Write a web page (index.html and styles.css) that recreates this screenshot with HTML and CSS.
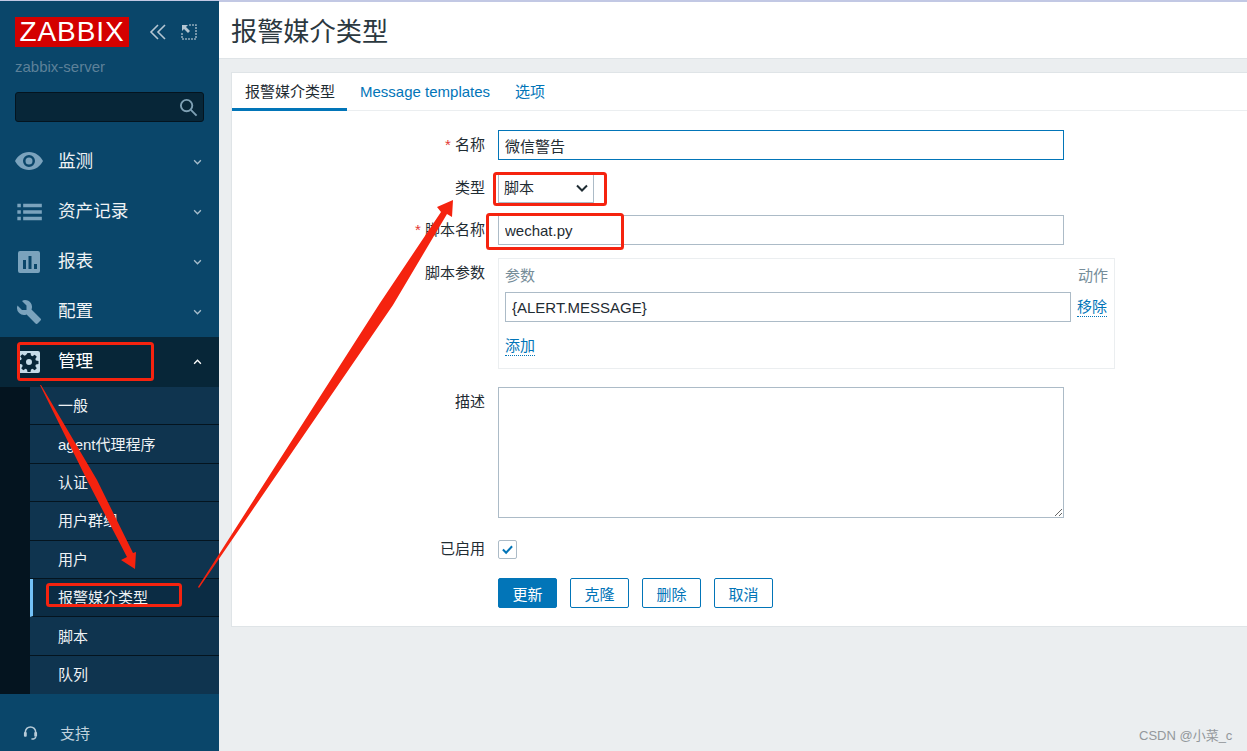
FILE: index.html
```html
<!DOCTYPE html>
<html lang="zh-CN">
<head>
<meta charset="utf-8">
<title>报警媒介类型</title>
<link rel="stylesheet" href="styles.css">
</head>
<body>
<div class="app">
  <aside class="sidebar">
    <div class="brand-row">
      <div class="logo">ZABBIX</div>
      <svg class="brand-icon collapse" viewBox="0 0 18 18"><path d="M9 2 2 9l7 7M16 2 9 9l7 7"/></svg>
      <svg class="brand-icon expand" viewBox="0 0 16 16"><path class="dots" d="M8 1h7v14H1V8"/><path class="solid" d="M1 1h6L5 3l4 4-2 2-4-4-2 2z"/></svg>
    </div>
    <div class="hostname">zabbix-server</div>
    <div class="search">
      <svg viewBox="0 0 20 20"><circle cx="8" cy="8" r="6"/><path d="m12.500 12.500 6 6"/></svg>
    </div>
    <nav class="menu">
      <a class="menu-item"><span class="mi"><svg viewBox="0 1 28 18"><path class="fill" fill-rule="evenodd" d="M14 0C7.500 0 2.500 4 0 9c2.500 5 7.500 9 14 9s11.500-4 14-9c-2.500-5-7.500-9-14-9zm0 3a6 6 0 1 1 0 12 6 6 0 0 1 0-12zm0 2.500a3.500 3.500 0 1 0 0 7 3.500 3.500 0 0 0 0-7z"/></svg></span><span class="ml">监测</span><svg class="chev" viewBox="0 0 8 5"><path d="m1 1 3 3 3-3"/></svg></a>
      <a class="menu-item"><span class="mi"><svg viewBox="0 0 24 14"><path class="fill" d="M2 0h3v3H2zM7 0h16v3H7zM2 5.500h3v3H2zM7 5.500h16v3H7zM2 11h3v3H2zM7 11h16v3H7z"/></svg></span><span class="ml">资产记录</span><svg class="chev" viewBox="0 0 8 5"><path d="m1 1 3 3 3-3"/></svg></a>
      <a class="menu-item"><span class="mi"><svg viewBox="0 0 24 24"><path class="fill" fill-rule="evenodd" d="M3 1h18a2 2 0 0 1 2 2v18a2 2 0 0 1-2 2H3a2 2 0 0 1-2-2V3a2 2 0 0 1 2-2zm3 9v9h3v-9zm5.500-4v13h3V6zM17 14v5h3v-5z"/></svg></span><span class="ml">报表</span><svg class="chev" viewBox="0 0 8 5"><path d="m1 1 3 3 3-3"/></svg></a>
      <a class="menu-item"><span class="mi"><svg viewBox="0 0 24 24"><path class="fill" d="M8 0a7 7 0 0 1 6.500 9.600L23.500 18.500a1.500 1.500 0 0 1 0 2.100l-2.900 2.900a1.500 1.500 0 0 1-2.100 0L9.600 14.500A7 7 0 0 1 .5 5.500L5 10h4.500V5.500L5 1A7 7 0 0 1 8 0z"/></svg></span><span class="ml">配置</span><svg class="chev" viewBox="0 0 8 5"><path d="m1 1 3 3 3-3"/></svg></a>
      <a class="menu-item open"><span class="mi"><svg viewBox="0 0 24 24"><rect class="fill" x="1" y="1" width="22" height="22" rx="2"/><path class="gear" fill-rule="evenodd" d="M10.500 3h3l.5 2.600 1.500.6 2.200-1.500 2.100 2.100-1.500 2.200.6 1.500 2.600.5v3l-2.600.5-.6 1.500 1.500 2.200-2.100 2.100-2.200-1.500-1.500.6-.5 2.600h-3l-.5-2.600-1.500-.6-2.200 1.500-2.100-2.100 1.500-2.200-.6-1.500L1.500 13.500v-3l2.600-.5.6-1.500-1.500-2.200 2.100-2.100 2.200 1.500 1.500-.6zM12 9a3 3 0 1 0 0 6 3 3 0 0 0 0-6z"/></svg></span><span class="ml">管理</span><svg class="chev" viewBox="0 0 8 5"><path d="m1 4 3-3 3 3"/></svg></a>
      <ul class="submenu">
        <li class="sub-item">一般</li>
        <li class="sub-item">agent代理程序</li>
        <li class="sub-item">认证</li>
        <li class="sub-item">用户群组</li>
        <li class="sub-item">用户</li>
        <li class="sub-item current">报警媒介类型</li>
        <li class="sub-item">脚本</li>
        <li class="sub-item last">队列</li>
      </ul>
    </nav>
    <div class="support">
      <svg viewBox="0 0 16 16"><path d="M2.500 10V7.500a5.500 5.500 0 0 1 11 0V10"/><rect x="1" y="7.500" width="3" height="5" rx="1"/><rect x="12" y="7.500" width="3" height="5" rx="1"/><path d="M13.500 12.500c0 1.500-2 2.500-4.500 2.500"/></svg>
      <span>支持</span>
    </div>
  </aside>

  <main class="main">
    <header class="page-head"><h1>报警媒介类型</h1></header>
    <section class="panel">
      <div class="tabs">
        <a class="tab active">报警媒介类型</a>
        <a class="tab">Message templates</a>
        <a class="tab">选项</a>
      </div>
      <form class="form">
        <div class="row row-name">
          <label class="lbl"><i>*</i> 名称</label>
          <input class="field focus" value="微信警告">
        </div>
        <div class="row row-type">
          <label class="lbl">类型</label>
          <div class="select"><span>脚本</span><svg viewBox="0 0 12 8"><path d="m1 1.500 5 5 5-5"/></svg></div>
        </div>
        <div class="row row-script">
          <label class="lbl"><i>*</i> 脚本名称</label>
          <input class="field" value="wechat.py">
        </div>
        <div class="row row-params">
          <label class="lbl">脚本参数</label>
          <div class="params">
            <div class="params-head"><span>参数</span><span>动作</span></div>
            <div class="params-row">
              <input class="field param" value="{ALERT.MESSAGE}">
              <a class="dotted">移除</a>
            </div>
            <a class="dotted add">添加</a>
          </div>
        </div>
        <div class="row row-desc">
          <label class="lbl">描述</label>
          <textarea class="area"></textarea>
        </div>
        <div class="row row-check">
          <label class="lbl">已启用</label>
          <span class="check"><svg viewBox="0 0 14 12"><path d="m2 6 3.500 3.500L12 2.500"/></svg></span>
        </div>
        <div class="row row-btns">
          <span class="lbl"></span>
          <div class="btns">
            <button type="button" class="btn primary">更新</button>
            <button type="button" class="btn">克隆</button>
            <button type="button" class="btn">删除</button>
            <button type="button" class="btn">取消</button>
          </div>
        </div>
      </form>
    </section>
  </main>
</div>

<div class="watermark">CSDN @小菜_c</div>

<svg class="annot" viewBox="0 0 1247 751">
  <g class="boxes">
    <rect x="18.500" y="343.500" width="134" height="36" rx="2"/>
    <rect x="47.500" y="584.500" width="133" height="21" rx="2"/>
    <rect x="494.500" y="173.500" width="111" height="31" rx="2"/>
    <rect x="487.500" y="214.500" width="135" height="34" rx="2"/>
  </g>
  <polygon class="arrow" points="40,385 41,385 97,480 133,553 136,552 135,569 121,560 127,557 87,480"/>
  <polygon class="arrow" points="198,587 380,303 441,212 437,207 453,200 452,217 447,214 393,305 199,588"/>
</svg>
</body>
</html>
```

FILE: styles.css
```css
* { box-sizing: border-box; }
html, body { margin: 0; height: 100%; overflow: hidden; }
body {
  font-family: "Liberation Sans", "Noto Sans CJK SC", sans-serif;
  font-size: 15px;
  color: #1f2c33;
  background: #ebeef0;
}
.app { display: flex; height: 751px; border-top: 2px solid #c2c8e4; }

/* Sidebar */
.sidebar {
  width: 219px; flex: none; margin-top: -1px;
  background: #0a466a;
  display: flex; flex-direction: column;
}
.brand-row { display: flex; align-items: center; padding: 16px 0 0 15px; height: 46px; }
.logo {
  width: 114px; height: 30px; background: #d40000; color: #fff;
  font-family: "Liberation Sans", sans-serif;
  font-size: 28px; line-height: 30px; letter-spacing: .9px; text-align: center;
}
.brand-icon { fill: none; }
.collapse { width: 18px; height: 18px; margin-left: 20px; stroke: #b5c6d2; stroke-width: 1.6; }
.expand { width: 16px; height: 16px; margin-left: 14px; }
.expand .dots { fill: none; stroke: #8fa9ba; stroke-width: 1.600; stroke-dasharray: 2 1; }
.expand .solid { fill: #b5c6d2; }
.hostname { margin: 11px 0 0 15px; height: 18px; line-height: 18px; color: #5d8199; }
.search {
  margin: 16px 0 0 15px; width: 189px; height: 30px;
  background: #072638; border: 1px solid #04141f; border-radius: 3px;
  display: flex; align-items: center; justify-content: flex-end; padding-right: 5px;
}
.search svg { width: 19px; height: 19px; fill: none; stroke: #7ea0b4; stroke-width: 2; }

.menu { margin-top: 15px; display: flex; flex-direction: column; }
.menu-item { height: 50px; display: flex; align-items: center; color: #f0f3f5; position: relative; }
.menu-item.open { background: #072638; color: #fff; }
.mi { width: 58px; flex: none; padding-left: 15px; display: flex; align-items: center; }
.mi svg { width: 28px; height: 24px; }
.fill { fill: #7ba3bd; }
.open .fill { fill: #c5dbe8; }
.gear { fill: #072638; }
.ml { font-size: 17.6px; flex: 1; line-height: 22px; margin-top: -2px; }
.chev { width: 9px; height: 6px; margin-right: 17px; fill: none; stroke: #a7bdcb; stroke-width: 1.200; }
.open .chev { stroke: #fff; }

.submenu {
  list-style: none; margin: 0; padding: 0 0 0 30px;
  background: #04141f;
}
.sub-item {
  height: 38.4px; padding: 0 0 2px 28px; display: flex; align-items: center;
  background: #0f344f; color: #eef2f5;
  border-bottom: 1px solid #04141f;
}
.sub-item.last { border-bottom: 0; }
.sub-item.current { background: #0b2c44; border-left: 3px solid #74c2f7; padding-left: 25px; }

.support {
  flex: 1; display: flex; align-items: center; padding: 19px 0 0 23px; color: #c0d2dd;
}
.support svg { width: 15px; height: 15px; margin-right: 22px; fill: #b7cbd8; }
.support svg path { fill: none; stroke: #b7cbd8; stroke-width: 1.600; }

/* Main */
.main { flex: 1; min-width: 0; display: flex; flex-direction: column; }
.page-head { height: 57px; background: #fff; border-bottom: 1px solid #dfe4e7; padding-left: 12px; display: flex; align-items: center; flex: none; }
.page-head h1 { margin: 0; font-size: 26.2px; font-weight: 400; color: #2b383f; }
.panel { margin: 13px 0 0 12px; height: 555px; background: #fff; border: 1px solid #dfe4e7; border-right: 0; }
.tabs { display: flex; height: 38px; border-bottom: 1px solid #ebeef0; }
.tab { height: 38px; padding: 0 12px 0 13px; line-height: 38px; color: #0275b8; }
.tab + .tab { padding: 0 12px 0 13px; }
.tab.active { color: #1f2c33; border-bottom: 3px solid #0275b8; }

.form { display: flex; flex-direction: column; }
.row { display: flex; align-items: flex-start; }
.lbl { width: 266px; flex: none; text-align: right; padding: 5px 13px 0 0; line-height: 20px; height: 25px; color: #1f2c33; white-space: nowrap; }
.lbl i { color: #e33734; font-style: normal; }
.row-name { margin-top: 19px; }
.row-type { margin-top: 13px; }
.row-script { margin-top: 12px; }
.row-params { margin-top: 13px; }
.row-desc { margin-top: 18px; }
.row-check { margin-top: 21px; align-items: center; }
.row-check .lbl { padding-top: 0; height: 20px; }
.row-btns { margin-top: 19px; }

.field {
  display: block; width: 566px; height: 30px; padding: 0 6px; margin: 0;
  border: 1px solid #acbbc7; background: #fff; color: #1f2c33;
  font: inherit; border-radius: 0; outline: 0;
}
.field.focus { border-color: #0275b8; }
.field.param { flex: none; }
.select {
  width: 96px; height: 30px; border: 1px solid #acbbc7; background: #fff;
  display: flex; align-items: center; justify-content: space-between; padding: 0 5px;
}
.select span { margin-top: -3px; }
.select svg { width: 12px; height: 8px; fill: none; stroke: #1f2c33; stroke-width: 2; }

.params { width: 617px; height: 111px; border: 1px solid #ebeef0; padding: 6px 6px 0; }
.params-head { display: flex; justify-content: space-between; height: 27px; line-height: 21px; color: #768d99; }
.params-row { display: flex; align-items: center; gap: 6px; }
.dotted { color: #0275b8; border-bottom: 1px dotted #0275b8; line-height: 18px; display: inline-block; }
.add { margin-top: 15px; }

.area { display: block; width: 566px; height: 131px; border: 1px solid #acbbc7; background: #fff; margin: 0; padding: 5px; font: inherit; border-radius: 0; outline: 0; }
.check {
  width: 19px; height: 19px; border: 1px solid #acbbc7; border-radius: 2px;
  display: flex; align-items: center; justify-content: center;
}
.check svg { width: 13px; height: 11px; fill: none; stroke: #0275b8; stroke-width: 2.200; }

.btns { display: flex; gap: 13px; }
.btn {
  width: 59px; height: 30px; padding: 0; margin: 0; font: inherit;
  background: #fff; color: #0275b8; border: 1px solid #0275b8; border-radius: 2px;
}
.btn.primary { background: #0275b8; color: #fff; }

/* Overlays */
.watermark {
  position: absolute; left: 1139px; top: 727px;
  font-size: 13px; line-height: 17px; color: #8a8f93; opacity: .9;
}
.annot { position: absolute; left: 0; top: 0; width: 1247px; height: 751px; pointer-events: none; }
.boxes rect { fill: none; stroke: #f5230f; stroke-width: 3; }
.arrow { fill: #f5230f; }
```
